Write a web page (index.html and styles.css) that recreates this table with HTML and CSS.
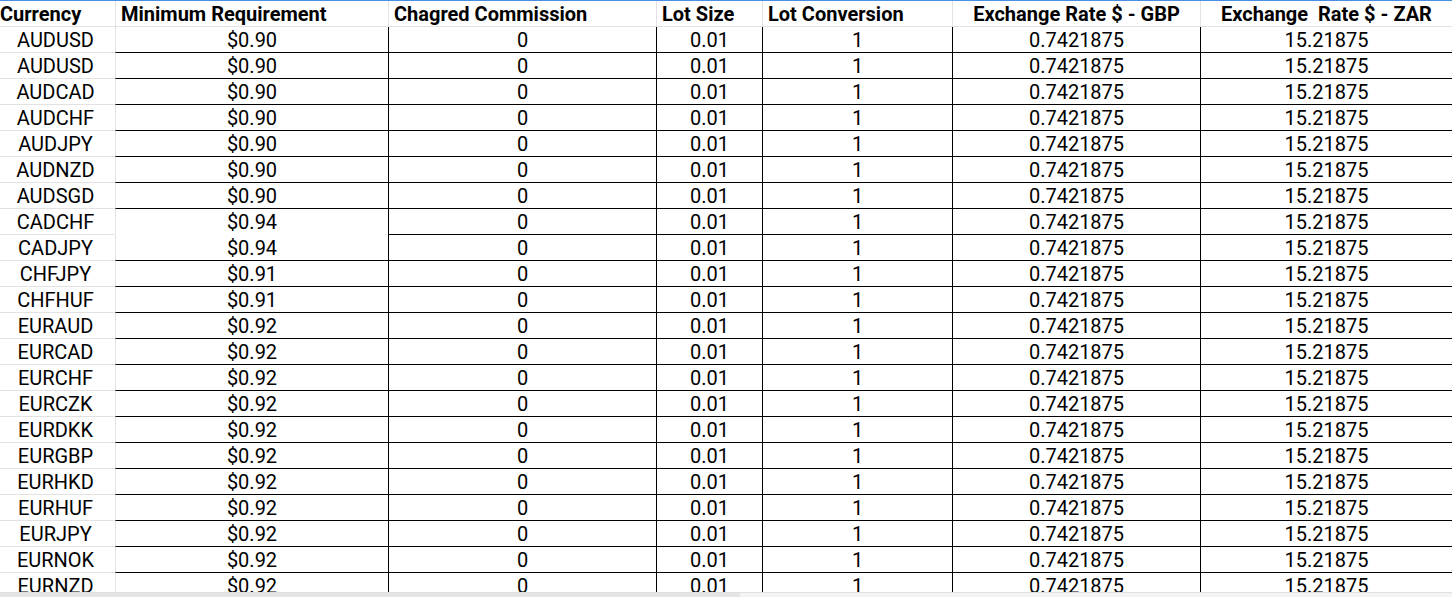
FILE: index.html
```html
<!DOCTYPE html>
<html>
<head>
<meta charset="utf-8">
<link rel="stylesheet" href="styles.css">
</head>
<body>
<div class="sheet">
  <div class="row head">
    <div class="c c1 left0">Currency</div>
    <div class="c c2 left">Minimum Requirement</div>
    <div class="c c3 left">Chagred Commission</div>
    <div class="c c4 left">Lot Size</div>
    <div class="c c5 left">Lot Conversion</div>
    <div class="c c6"><span class="cond">Exchange Rate $ - GBP</span></div>
    <div class="c c7"><span class="cond">Exchange  Rate $ - ZAR</span></div>
  </div>
  <div id="body"></div>
</div>
<div class="hscroll"><div class="thumb"></div></div>
<script src="app.js"></script>
</body>
</html>
```
FILE: app.js
```js
const rows = [
  ["AUDUSD","$0.90"],["AUDUSD","$0.90"],["AUDCAD","$0.90"],["AUDCHF","$0.90"],
  ["AUDJPY","$0.90"],["AUDNZD","$0.90"],["AUDSGD","$0.90"],["CADCHF","$0.94"],
  ["CADJPY","$0.94"],["CHFJPY","$0.91"],["CHFHUF","$0.91"],["EURAUD","$0.92"],
  ["EURCAD","$0.92"],["EURCHF","$0.92"],["EURCZK","$0.92"],["EURDKK","$0.92"],
  ["EURGBP","$0.92"],["EURHKD","$0.92"],["EURHUF","$0.92"],["EURJPY","$0.92"],
  ["EURNOK","$0.92"],["EURNZD","$0.92"]
];
const body = document.getElementById("body");
rows.forEach((r) => {
  const row = document.createElement("div");
  row.className = "row data";
  const nob = r[0] === "CADCHF" ? " nob" : "";
  row.innerHTML =
    `<div class="c c1">${r[0]}</div>` +
    `<div class="c c2${nob}">${r[1]}</div>` +
    `<div class="c c3">0</div>` +
    `<div class="c c4">0.01</div>` +
    `<div class="c c5">1</div>` +
    `<div class="c c6 num">0.7421875</div>` +
    `<div class="c c7 num">15.21875</div>`;
  body.appendChild(row);
});
```
FILE: styles.css
```css
html, body {
  margin: 0;
  padding: 0;
  background: #fff;
  overflow: hidden;
  height: 597px;
}
.sheet {
  border-top: 1px solid #4a8fe4;
  font-family: Roboto, "Liberation Sans", Arial, sans-serif;
  color: #000;
}
.row {
  display: grid;
  grid-template-columns: 115px 273px 268px 106px 190px 248px 1fr;
  height: 26px;
}
.c {
  box-sizing: border-box;
  height: 26px;
  border-bottom: 1px solid #000;
  border-left: 1px solid #000;
  display: flex;
  align-items: center;
  justify-content: center;
  white-space: pre;
  overflow: hidden;
  font-size: 20px;
  padding-top: 1px;
}
.c1 {
  border-left: none;
  border-bottom-color: #e2e2e2;
  padding-right: 4px;
}
.c2 {
  border-left-color: #e2e2e2;
}
.c2.nob {
  border-bottom-color: transparent;
}
.head .c {
  border-color: #e2e2e2;
  font-weight: bold;
  font-size: 20px;
  padding-top: 0;
}
.head .c1 { border-left: none; }
.head .left { justify-content: flex-start; padding-left: 5px; }
.head .left0 { justify-content: flex-start; padding-left: 0; }
.head .cond {
  display: inline-block;
}
.hscroll {
  position: absolute;
  left: 0;
  right: 0;
  bottom: 0;
  height: 4px;
  background: #f4f4f4;
  border-top: 1px solid #e0e0e0;
}
.thumb {
  width: 740px;
  height: 4px;
  background: #e4e4e4;
}
```
